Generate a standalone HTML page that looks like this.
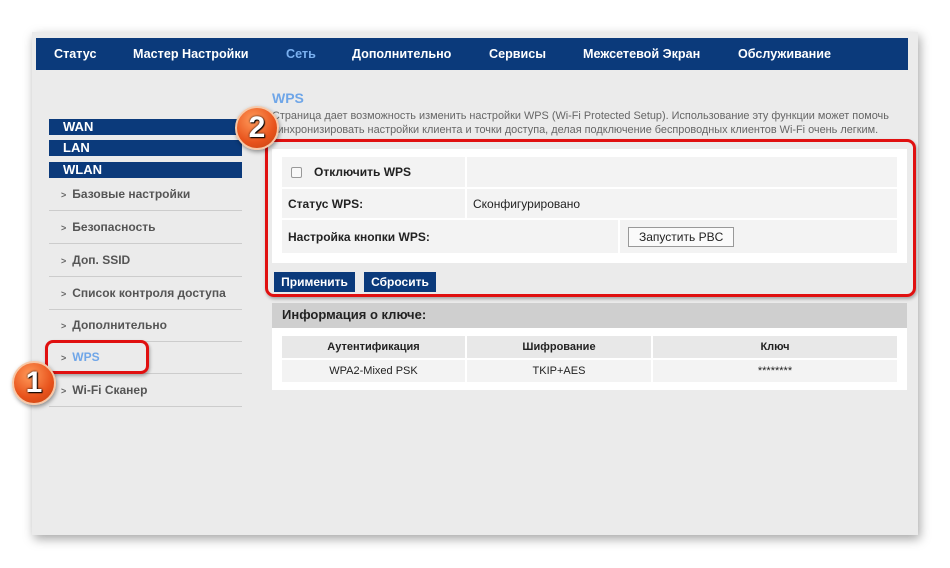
<!DOCTYPE html>
<html><head><meta charset="utf-8"><style>
*{margin:0;padding:0;box-sizing:border-box}
body{width:950px;height:568px;background:#fff;position:relative;overflow:hidden;font-family:"Liberation Sans",Arial,sans-serif}
.abs{position:absolute}
#panel{left:32px;top:32px;width:886px;height:503px;background:#ebebeb;box-shadow:2px 4px 10px rgba(0,0,0,.35)}
#nav{left:36px;top:38px;width:872px;height:32px;background:#0b3a7b}
#nav span{position:absolute;top:9px;color:#fff;font-weight:bold;font-size:12.6px}
.hd{left:49px;width:193px;height:16px;background:#0b3a7b;color:#fff;font-weight:bold;font-size:13px;padding-left:14px;line-height:16px}
.it{left:49px;width:193px;height:33px;border-bottom:1px solid #ccc;color:#555;font-weight:bold;font-size:12px;line-height:32px;padding-left:12px}
.it b{font-size:9px;color:#666;margin-right:6px}
.cell{background:#f3f3f3;font-size:12px;color:#222;padding-left:6px;display:flex;align-items:center}
.btn{background:#0b3a7b;color:#fff;font-weight:bold;font-size:12px;text-align:center;line-height:20px;height:20px}
.th{background:#e8e8e8;font-size:11px;font-weight:bold;color:#222;text-align:center;line-height:22px}
.td{background:#f3f3f3;font-size:11px;color:#222;text-align:center;line-height:22px}
.badge{width:44px;height:44px;border-radius:50%;background:radial-gradient(circle at 40% 30%,#ff9a5a,#e8531c 60%,#c2400f);border:2px solid #f6c8a8;box-shadow:1px 2px 4px rgba(0,0,0,.4);color:#fff;font-weight:bold;font-size:30px;text-align:center;line-height:40px;text-shadow:0 0 2px #000,1px 1px 1px #000}
</style></head><body>
<div id="panel" class="abs"></div>
<div id="nav" class="abs">
<span style="left:18px">Статус</span>
<span style="left:97px">Мастер Настройки</span>
<span style="left:250px;color:#7ab0f0">Сеть</span>
<span style="left:316px">Дополнительно</span>
<span style="left:453px">Сервисы</span>
<span style="left:547px">Межсетевой Экран</span>
<span style="left:702px">Обслуживание</span>
</div>
<div class="abs hd" style="top:119px">WAN</div>
<div class="abs hd" style="top:140px">LAN</div>
<div class="abs hd" style="top:162px">WLAN</div>
<div class="abs it" style="top:178px"><b>&gt;</b>Базовые настройки</div>
<div class="abs it" style="top:211px"><b>&gt;</b>Безопасность</div>
<div class="abs it" style="top:244px"><b>&gt;</b>Доп. SSID</div>
<div class="abs it" style="top:277px"><b>&gt;</b>Список контроля доступа</div>
<div class="abs it" style="top:309px"><b>&gt;</b>Дополнительно</div>
<div class="abs it" style="top:341px;color:#6fa6e8"><b>&gt;</b>WPS</div>
<div class="abs it" style="top:374px"><b>&gt;</b>Wi-Fi Сканер</div>

<div class="abs" style="left:272px;top:90px;color:#6fa6e8;font-weight:bold;font-size:14px">WPS</div>
<div class="abs" style="left:272px;top:109px;width:645px;color:#666;font-size:10.9px;line-height:14px;white-space:nowrap">Страница дает возможность изменить настройки WPS (Wi-Fi Protected Setup). Использование эту функции может помочь<br>синхронизировать настройки клиента и точки доступа, делая подключение беспроводных клиентов Wi-Fi очень легким.</div>

<div class="abs" style="left:272px;top:149px;width:635px;height:114px;background:#fff"></div>
<div class="abs cell" style="left:282px;top:157px;width:183px;height:30px;font-weight:bold"><span style="display:inline-block;width:11px;height:11px;border:1px solid #999;border-radius:2px;background:#f8f8f8;margin:0 12px 0 3px"></span>Отключить WPS</div>
<div class="abs cell" style="left:467px;top:157px;width:430px;height:30px"></div>
<div class="abs cell" style="left:282px;top:189px;width:183px;height:29px;font-weight:bold">Статус WPS:</div>
<div class="abs cell" style="left:467px;top:189px;width:430px;height:29px">Сконфигурировано</div>
<div class="abs cell" style="left:282px;top:220px;width:336px;height:33px;font-weight:bold">Настройка кнопки WPS:</div>
<div class="abs cell" style="left:620px;top:220px;width:277px;height:33px"><span style="margin-left:2px;border:1px solid #999;background:#fafafa;padding:2px 10px;font-size:12px">Запустить PBC</span></div>
<div class="abs btn" style="left:274px;top:272px;width:81px">Применить</div>
<div class="abs btn" style="left:364px;top:272px;width:72px">Сбросить</div>

<div class="abs" style="left:272px;top:303px;width:635px;height:25px;background:#cfcfcf;font-weight:bold;font-size:13px;color:#222;padding-left:10px;line-height:24px">Информация о ключе:</div>
<div class="abs" style="left:272px;top:328px;width:635px;height:62px;background:#fff"></div>
<div class="abs th" style="left:282px;top:336px;width:183px">Аутентификация</div>
<div class="abs th" style="left:467px;top:336px;width:184px">Шифрование</div>
<div class="abs th" style="left:653px;top:336px;width:244px">Ключ</div>
<div class="abs td" style="left:282px;top:360px;width:183px">WPA2-Mixed PSK</div>
<div class="abs td" style="left:467px;top:360px;width:184px">TKIP+AES</div>
<div class="abs td" style="left:653px;top:360px;width:244px">********</div>

<div class="abs" style="left:265px;top:139px;width:651px;height:158px;border:3px solid #e01010;border-radius:9px;box-shadow:1px 2px 3px rgba(0,0,0,.3)"></div>
<div class="abs" style="left:45px;top:340px;width:104px;height:34px;border:3px solid #e01010;border-radius:8px;box-shadow:1px 2px 3px rgba(0,0,0,.3)"></div>
<div class="abs badge" style="left:12px;top:361px">1</div>
<div class="abs badge" style="left:235px;top:106px">2</div>
</body></html>
